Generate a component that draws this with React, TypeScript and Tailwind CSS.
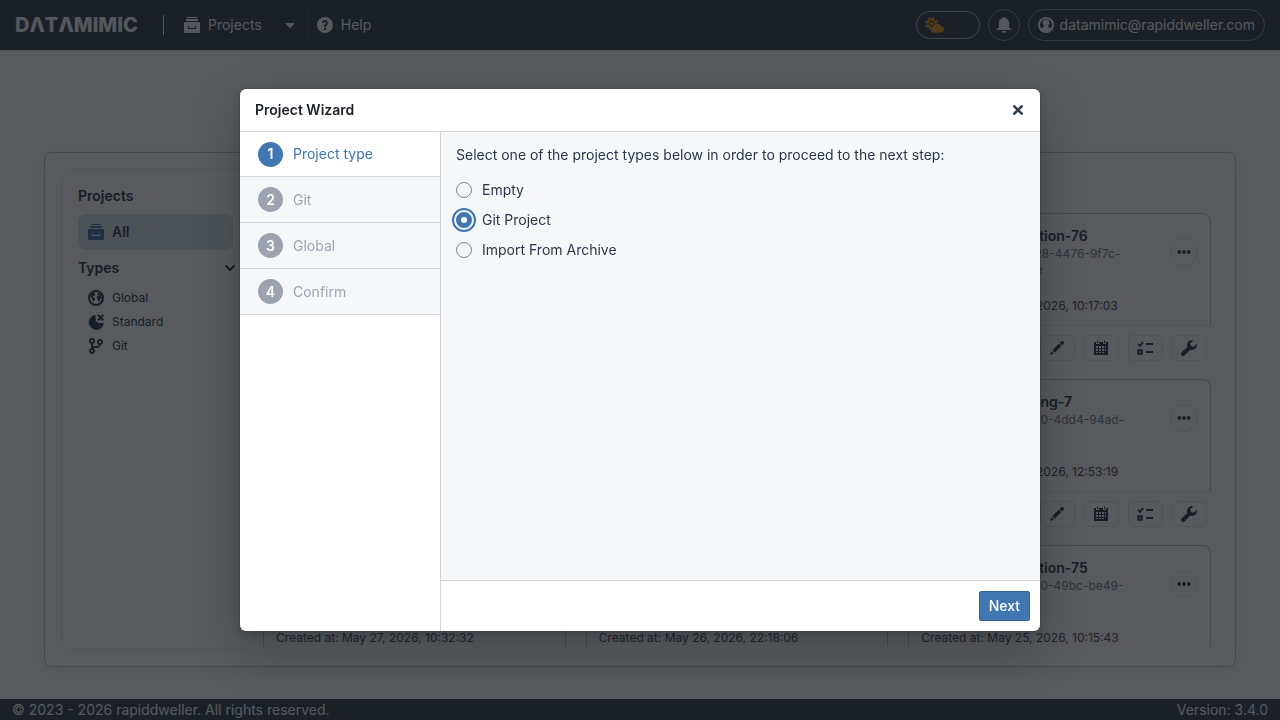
import { useState, type ReactNode } from "react";

type IconProps = { className?: string };

function Svg({ className = "size-4", children }: { className?: string; children: ReactNode }) {
  return (
    <svg viewBox="0 0 16 16" className={className} fill="currentColor" aria-hidden="true">
      {children}
    </svg>
  );
}

const ProjectsIcon = ({ className }: IconProps) => (
  <Svg className={className}>
    <path d="M3 0h10v1H3zM2 2h12v2H2z" />
    <path
      fillRule="evenodd"
      d="M1 5h14c.55 0 1 .45 1 1v9c0 .55-.45 1-1 1H1c-.55 0-1-.45-1-1V6c0-.55.45-1 1-1zm3 4v2c0 .55.45 1 1 1h6c.55 0 1-.45 1-1V9h-1v2H5V9z"
    />
  </Svg>
);

const HelpIcon = ({ className }: IconProps) => (
  <Svg className={className}>
    <path
      fillRule="evenodd"
      d="M8 0a8 8 0 100 16A8 8 0 008 0zM7 11h2v2H7zm3.9-5.1c-.1 1.5-1 2-1.5 2.6-.3.4-.4.7-.4 1.5H7c0-1.200.2-1.800.8-2.500.5-.6 1.200-.9 1.200-1.700 0-.5-.4-.9-1-.9-.7 0-1.100.5-1.100 1.200H5C5 4.200 6.200 3 8 3c1.800 0 3 1.100 2.900 2.900z"
    />
  </Svg>
);

const CaretIcon = ({ className }: IconProps) => (
  <Svg className={className}>
    <path d="M4 6.100h8c.4 0 .5.4.3.7l-3.900 4.200a.5.5 0 01-.8 0L3.700 6.800c-.2-.3-.1-.7.3-.7z" />
  </Svg>
);

const ChevronIcon = ({ className }: IconProps) => (
  <Svg className={className}>
    <path d="M4 6l4 4 4-4" fill="none" stroke="currentColor" strokeWidth="2" strokeLinecap="round" strokeLinejoin="round" />
  </Svg>
);

const BellIcon = ({ className }: IconProps) => (
  <Svg className={className}>
    <path d="M8 16c1.100 0 2-.9 2-2H6c0 1.100.9 2 2 2zM14 11c-.55 0-1-.45-1-1V6c0-2.430-1.730-4.450-4.020-4.900 0-.04.02-.06.02-.1 0-.55-.45-1-1-1S7 .45 7 1c0 .04.02.06.02.1A4.990 4.990 0 003 6v4c0 .55-.45 1-1 1s-1 .45-1 1 .45 1 1 1h12c.55 0 1-.45 1-1s-.45-1-1-1z" />
  </Svg>
);

const UserIcon = ({ className }: IconProps) => (
  <Svg className={className}>
    <path
      fillRule="evenodd"
      d="M8 0a8 8 0 100 16A8 8 0 008 0zM2 8a6 6 0 1110.900 3.400c-.6-.6-1.700-.9-2.900-1.400-.1 0-.1-1 .1-1.200.5-.6.8-1.300.9-2.100.4-.2.5-1.200.1-1.400C11.300 3.500 10 2.500 8 2.500S4.700 3.500 4.900 5.300c-.4.2-.3 1.200.1 1.400.1.8.4 1.500.9 2.100.2.2.2 1.200.1 1.200-1.200.5-2.300.8-2.900 1.400A6 6 0 012 8z"
    />
  </Svg>
);

const SunCloudIcon = ({ className }: IconProps) => (
  <svg viewBox="0 0 20 16" className={className} fill="currentColor" aria-hidden="true">
    <circle cx="6.500" cy="6.500" r="3.900" fill="none" stroke="currentColor" strokeWidth="2" />
    <circle cx="6.500" cy="6.500" r="5.600" fill="none" stroke="currentColor" strokeWidth="2" strokeDasharray="2.200 2.198" />
    <circle cx="6.500" cy="6.500" r="1.700" />
    <path
      d="M8.500 16a3.200 3.200 0 01-.6-6.300 4.200 4.200 0 018-1A3.700 3.700 0 0116.300 16z"
      stroke="#343c4c"
      strokeWidth="0.600"
    />
  </svg>
);

const GlobeIcon = ({ className }: IconProps) => (
  <Svg className={className}>
    <circle cx="8" cy="8" r="7" fill="none" stroke="currentColor" strokeWidth="2" />
    <path d="M2.500 6L4.500 3l2.600-.5-.3 1.200.6.5-1 1.500-1.200.3-.3 1.300 1.500.6.8 1.200-1 1.200-.4 1.700-1-.9-.4-2L3.200 7.800zM9.500 3l2.300.6 1.600 2.400.3 2.300-1.200.2-.4 1.800-1.200 1.700-1-1.400V9L8.900 8.300l-.2-1.500 1.300-.8.9.2-.2-1-1.200-.4z" />
  </Svg>
);

const StandardIcon = ({ className }: IconProps) => (
  <Svg className={className}>
    <path d="M7.500 1a7.500 7.500 0 108.300 8h-5.300L7.900 7z" />
    <path d="M10.500 1.500l4.200 4.200M14.700 1.500l-4.200 4.200" fill="none" stroke="currentColor" strokeWidth="2" strokeLinecap="round" />
  </Svg>
);

const BranchIcon = ({ className }: IconProps) => (
  <Svg className={className}>
    <path
      fillRule="evenodd"
      d="M12 1c-1.660 0-3 1.340-3 3 0 1.250.76 2.320 1.850 2.770A2.020 2.020 0 019 8H7c-.73 0-1.410.21-2 .55V5.820C6.160 5.400 7 4.300 7 3c0-1.660-1.340-3-3-3S1 1.340 1 3c0 1.300.84 2.400 2 2.820v4.370c-1.160.4-2 1.510-2 2.810 0 1.660 1.340 3 3 3s3-1.340 3-3c0-1.040-.53-1.950-1.320-2.490.35-.31.81-.51 1.320-.51h2c1.920 0 3.520-1.350 3.910-3.150A2.996 2.996 0 0012 1zM4 2c.55 0 1 .45 1 1s-.45 1-1 1-1-.45-1-1 .45-1 1-1zm0 12c-.55 0-1-.45-1-1s.45-1 1-1 1 .45 1 1-.45 1-1 1zm8-9c-.55 0-1-.45-1-1s.45-1 1-1 1 .45 1 1-.45 1-1 1z"
    />
  </Svg>
);

const MoreIcon = ({ className }: IconProps) => (
  <Svg className={className}>
    <circle cx="2.500" cy="8" r="2.200" />
    <circle cx="8" cy="8" r="2.200" />
    <circle cx="13.500" cy="8" r="2.200" />
  </Svg>
);

const PencilIcon = ({ className }: IconProps) => (
  <Svg className={className}>
    <path d="M3.250 10.260l2.470 2.470 6.690-6.690-2.460-2.480-6.700 6.700zM.99 14.990l3.860-1.390-2.460-2.440L.99 14.990zm12.250-14c-.48 0-.92.2-1.240.51l-1.440 1.440 2.470 2.470 1.440-1.440c.32-.32.51-.75.51-1.240.01-.95-.77-1.740-1.740-1.740z" />
  </Svg>
);

const CalendarIcon = ({ className }: IconProps) => (
  <Svg className={className}>
    <path
      fillRule="evenodd"
      d="M1 2h2v2h3V2h4v2h3V2h2v13H1zM3 6v2h2V6zm3 0v2h2V6zm3 0v2h2V6zm3 0v2h1V6zM3 9v2h2V9zm3 0v2h2V9zm3 0v2h2V9zm3 0v2h1V9zM3 12v1h2v-1zm3 0v1h2v-1zm3 0v1h2v-1z"
    />
    <path d="M4 .5h1V3H4zM11 .5h1V3h-1z" />
  </Svg>
);

const ChecklistIcon = ({ className }: IconProps) => (
  <Svg className={className}>
    <path d="M1 3.800l2 2L6.200 2" fill="none" stroke="currentColor" strokeWidth="1.800" />
    <path d="M1.300 10.300h3.400v3.400H1.300z" fill="none" stroke="currentColor" strokeWidth="2" />
    <path d="M9 3h7v2H9zM9 11h7v2H9z" />
  </Svg>
);

const WrenchIcon = ({ className }: IconProps) => (
  <Svg className={className}>
    <path d="M15.830 3.700l-3.060 3.050-2.840-.7-.7-2.830L12.290.17a5.004 5.004 0 00-4.830 1.290 4.967 4.967 0 00-1.120 5.360L.58 12.580c-.36.36-.58.860-.58 1.410 0 1.100.9 2 2 2 .55 0 1.050-.22 1.410-.59l5.770-5.770c1.790.69 3.910.330 5.350-1.120 1.320-1.300 1.740-3.150 1.300-4.810z" />
  </Svg>
);

const CrossIcon = ({ className }: IconProps) => (
  <Svg className={className}>
    <path d="M4.300 4.300l7.400 7.400M11.700 4.300l-7.400 7.400" fill="none" stroke="currentColor" strokeWidth="2.600" strokeLinecap="round" />
  </Svg>
);

type Project = { name?: string; id?: string; created?: string };

const cards: Project[] = [
  {},
  {},
  { name: "Data Generation-76", id: "8986b0e4-a028-4476-9f7c-5b80d6e3a42e", created: "May 25, 2026, 10:17:03" },
  {},
  {},
  { name: "Data Cleansing-7", id: "a54c90e7-bd60-4dd4-94ad-", created: "May 25, 2026, 12:53:19" },
  { created: "May 27, 2026, 10:32:32" },
  { created: "May 26, 2026, 22:18:06" },
  { name: "Data Generation-75", id: "d70e48b5-ce90-49bc-be49-", created: "May 25, 2026, 10:15:43" },
];

const actions = [
  { label: "Edit", Icon: PencilIcon },
  { label: "Schedule", Icon: CalendarIcon },
  { label: "Tasks", Icon: ChecklistIcon },
  { label: "Settings", Icon: WrenchIcon },
];

function ProjectCard({ name, id, created }: Project) {
  return (
    <article className="flex flex-col">
      <div className="flex h-[113px] flex-col justify-between rounded-t-lg border border-[#b4cad6] border-b-[#e6eaee] px-3 pt-3 pb-[11px]">
        <div className="flex items-start gap-2.5">
          <ProjectsIcon className="mt-1 size-6 shrink-0" />
          <div className="min-w-0 flex-1">
            {name && <h3 className="text-sm leading-5 font-semibold">{name}</h3>}
            {id && <p className="max-w-44 text-xs leading-4 text-[#738091]">{id}</p>}
          </div>
          <button type="button" aria-label="More" className="mt-3 flex size-7 shrink-0 items-center justify-center rounded-full border border-[#e0e4e9]">
            <MoreIcon className="size-3.5" />
          </button>
        </div>
        {created && <p className="text-xs leading-4 text-[#404854]">Created at: {created}</p>}
      </div>
      <div className="flex justify-end gap-[9px] px-1 pt-[9px] pb-4.5">
        {actions.map(({ label, Icon }) => (
          <button key={label} type="button" aria-label={label} className="flex h-6.5 w-[35px] items-center justify-center rounded-md border border-[#e0e4e9]">
            <Icon className="size-4" />
          </button>
        ))}
      </div>
    </article>
  );
}

function Header() {
  const navButton = "flex h-7.5 items-center border border-[#3e4656]";
  return (
    <header className="flex h-12.5 shrink-0 items-center justify-between bg-[#343c4c] px-[15px] text-sm text-[#f6f7f9] shadow-sm">
      <div className="flex items-center">
        <span aria-label="DATAMIMIC" className="w-37 text-xl leading-6 font-extrabold">
          DΛTΛMIMIC
        </span>
        <span className="h-5 w-px bg-[#f6f7f9]" />
        <nav className="ml-2.5 flex">
          <button type="button" className={navButton + " gap-2 px-[9px]"}>
            <ProjectsIcon className="size-4" />
            Projects
          </button>
          <button type="button" aria-label="Open project menu" className={navButton + " px-[9px]"}>
            <CaretIcon className="size-4" />
          </button>
          <button type="button" className={navButton + " gap-2 px-2"}>
            <HelpIcon className="size-4" />
            Help
          </button>
        </nav>
      </div>
      <div className="flex items-center gap-2">
        <button type="button" aria-label="Toggle theme" className="flex h-7 w-16 items-center rounded-full border border-[#aab0bc] px-2">
          <SunCloudIcon className="h-4 w-5 text-[#e69a1a]" />
        </button>
        <button type="button" aria-label="Notifications" className="flex size-8 items-center justify-center rounded-full border border-[#8a919e]">
          <BellIcon className="size-4" />
        </button>
        <button type="button" className="flex h-8 items-center gap-1.5 rounded-full border border-[#8a919e] px-[9px]">
          <UserIcon className="size-4" />
          datamimic@rapiddweller.com
        </button>
      </div>
    </header>
  );
}

function Sidebar() {
  const types = [
    { label: "Global", Icon: GlobeIcon },
    { label: "Standard", Icon: StandardIcon },
    { label: "Git", Icon: BranchIcon },
  ];
  return (
    <aside className="w-[194px] shrink-0 rounded-xl border border-[#e6eaee] p-4">
      <h2 className="mb-2 text-sm leading-5 font-semibold">Projects</h2>
      <button type="button" className="flex h-9 w-[155px] items-center gap-2 rounded-lg bg-[#dae4e6] px-2.5 text-sm font-semibold">
        <ProjectsIcon className="size-4 text-[#4177b0]" />
        All
      </button>
      <div className="mt-2 flex items-center justify-between">
        <h2 className="text-sm leading-5 font-semibold">Types</h2>
        <ChevronIcon className="size-4" />
      </div>
      <ul className="mt-2 text-xs">
        {types.map(({ label, Icon }) => (
          <li key={label} className="flex h-6 items-center gap-2 pl-2.5">
            <Icon className="size-4" />
            {label}
          </li>
        ))}
      </ul>
    </aside>
  );
}

const steps = ["Project type", "Git", "Global", "Confirm"];
const projectTypes = ["Empty", "Git Project", "Import From Archive"];

function Wizard() {
  const [selected, setSelected] = useState("Git Project");
  return (
    <section
      role="dialog"
      aria-modal="true"
      aria-labelledby="wizard-title"
      className="flex h-[542px] max-h-full w-[800px] max-w-full flex-col overflow-hidden rounded-md bg-white text-sm shadow-[0_0_0_1px_rgba(17,20,24,0.1),0_4px_8px_rgba(17,20,24,0.2),0_18px_46px_6px_rgba(17,20,24,0.2)]"
    >
      <header className="flex h-[43px] shrink-0 items-center justify-between border-b border-[#d1d4d9] pr-3.5 pl-[15px]">
        <h1 id="wizard-title" className="font-semibold text-[#1c2127]">Project Wizard</h1>
        <button type="button" aria-label="Close">
          <CrossIcon className="size-4 text-[#2f3a4d]" />
        </button>
      </header>
      <div className="flex min-h-0 flex-1">
        <ol className="w-[201px] shrink-0 border-r border-[#d1d4d9]">
          {steps.map((step, i) => (
            <li
              key={step}
              aria-current={i === 0 ? "step" : undefined}
              className={
                i === 0
                  ? "flex h-[45px] items-center gap-2.5 border-b border-[#d1d4d9] bg-white px-4.5 text-[#4177b0]"
                  : "flex h-[46px] items-center gap-2.5 border-b border-[#d1d4d9] bg-[#f6f7f9] px-4.5 text-[#9ca3af]"
              }
            >
              <span
                className={
                  i === 0
                    ? "flex size-[25px] items-center justify-center rounded-full bg-[#4177b0] font-semibold text-white"
                    : "flex size-[25px] items-center justify-center rounded-full bg-[#9ca3af] font-semibold text-white"
                }
              >
                {i + 1}
              </span>
              {step}
            </li>
          ))}
        </ol>
        <div className="flex min-w-0 flex-1 flex-col">
          <fieldset className="flex-1 bg-[#f6f7f9] px-[15px] pt-[13px] text-[#2b364a]">
            <legend className="float-left mb-2.5 w-full leading-5">
              Select one of the project types below in order to proceed to the next step:
            </legend>
            {projectTypes.map((type) => (
              <label key={type} className="clear-both flex h-[30px] items-center gap-2.5">
                <input
                  type="radio"
                  name="project-type"
                  value={type}
                  checked={selected === type}
                  onChange={() => setSelected(type)}
                  className="size-4 appearance-none rounded-full border border-[#7a8597] outline-2 outline-offset-2 outline-transparent checked:border-5 checked:border-[#4177b0] checked:bg-white checked:outline-[#4177b0]"
                />
                {type}
              </label>
            ))}
          </fieldset>
          <footer className="flex h-[51px] shrink-0 items-center justify-end border-t border-[#d1d4d9] px-2.5">
            <button type="button" className="h-[30px] rounded-xs border border-[#35639a] bg-[#4177b0] px-[9px] font-medium text-white">
              Next
            </button>
          </footer>
        </div>
      </div>
    </section>
  );
}

export default function App() {
  return (
    <div className="font-[Inter,'Liberation_Sans',sans-serif] text-[#2b364a]">
      <div className="flex h-screen flex-col bg-white">
        <Header />
        <main className="flex min-h-0 flex-1 flex-col px-11 pt-[102px] pb-8">
          <div className="flex min-h-0 flex-1 gap-2 rounded-lg border border-[#b4cad6] p-4 shadow-[0_4px_20px_rgba(17,20,24,0.08)]">
            <Sidebar />
            <div className="min-w-0 flex-1 pt-11 pr-2 pb-1">
              <div className="grid h-full grid-cols-3 content-start gap-x-5 overflow-hidden">
                {cards.map((card, i) => (
                  <ProjectCard key={i} {...card} />
                ))}
              </div>
            </div>
          </div>
        </main>
        <footer className="flex h-[21px] shrink-0 items-center justify-between bg-[#343c4c] px-3 text-sm text-[#f6f7f9]">
          <span>© 2023 - 2026 rapiddweller. All rights reserved.</span>
          <span>Version: 3.4.0</span>
        </footer>
      </div>
      <div className="fixed inset-0 flex items-center justify-center bg-[#111418]/70">
        <Wizard />
      </div>
    </div>
  );
}
